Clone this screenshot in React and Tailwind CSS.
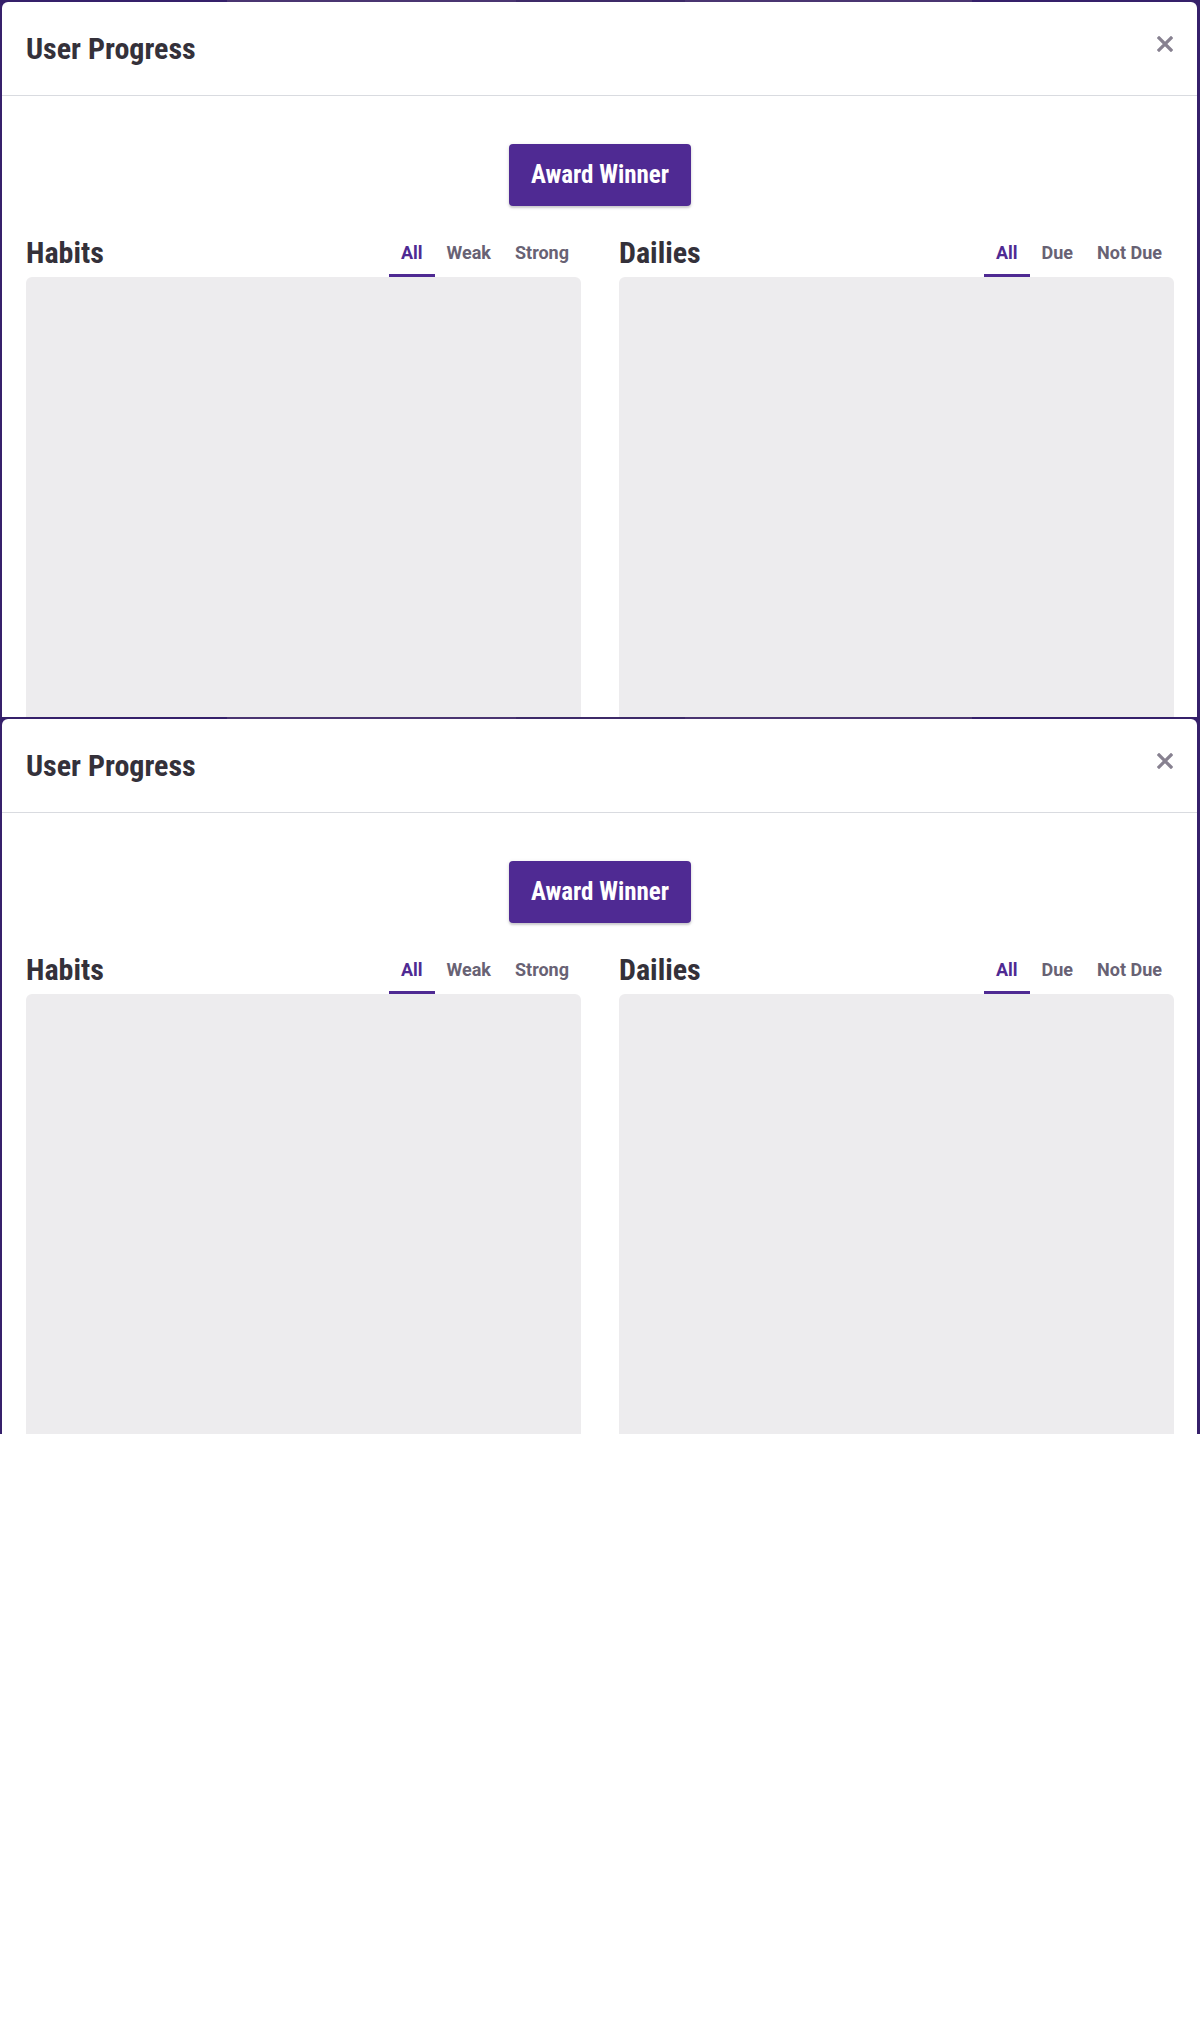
import React, { useState } from "react";

// 한 화면(717px) 안에 모달이 잘려 보이는 형태
const TILE_COUNT = 2;

const condensed = {
  fontFamily: '"Roboto Condensed", Roboto, "Liberation Sans", sans-serif',
};

function CloseIcon() {
  return (
    <svg width="16" height="16" viewBox="0 0 16 16" className="block">
      <path
        d="M2 2 L14 14 M14 2 L2 14"
        stroke="#878190"
        strokeWidth="3.2"
        strokeLinecap="square"
      />
    </svg>
  );
}

function Tabs({ items }) {
  const [active, setActive] = useState(items[0]);
  return (
    <div className="flex font-['Roboto',sans-serif]">
      {items.map((item) => (
        <button
          key={item}
          type="button"
          onClick={() => setActive(item)}
          className={`px-[12px] pb-[9px] text-[18px] leading-[24px] font-bold border-b-[3px] ${
            active === item
              ? "text-[#4f2a93] border-[#4f2a93]"
              : "text-[#686274] border-transparent"
          }`}
        >
          {item}
        </button>
      ))}
    </div>
  );
}

function Column({ title, tabs }) {
  return (
    <div className="flex flex-col min-w-0">
      <div className="flex items-end justify-between">
        <h2
          style={condensed}
          className="pb-[6px] text-[30px] leading-[36px] font-bold text-[#34313a] font-stretch-condensed"
        >
          {title}
        </h2>
        <Tabs items={tabs} />
      </div>
      <div className="h-[500px] rounded-t-[6px] bg-[#edecee]" />
    </div>
  );
}

function ProgressModal() {
  return (
    <div className="flex h-[717px] flex-col overflow-hidden bg-[#36206b]">
      {/* 모달 뒤 페이지 상단 (흐릿하게 보이는 부분) */}
      <div className="flex h-[2px] shrink-0">
        <div className="w-[227px] bg-[#35206a]" />
        <div className="w-[289px] bg-[#4a3571]" />
        <div className="w-[169px] bg-[#3d2a68]" />
        <div className="w-[287px] bg-[#4a3571]" />
        <div className="flex-1 bg-[#35206a]" />
      </div>

      <div className="ml-[2px] mr-[3px] flex-1 rounded-t-[6px] bg-white">
        {/* 헤더 */}
        <div className="flex h-[94px] justify-between border-b border-[#d9dbe0] pl-[24px] pr-[24px]">
          <h1
            style={condensed}
            className="self-center text-[30px] leading-[36px] font-bold text-[#34313a] font-stretch-condensed"
          >
            User Progress
          </h1>
          <button type="button" className="mt-[34px] self-start">
            <CloseIcon />
          </button>
        </div>

        {/* 본문 */}
        <div className="pl-[24px] pr-[23px] pt-[48px]">
          <div className="flex justify-center">
            <button
              type="button"
              style={condensed}
              className="h-[62px] w-[182px] rounded-[4px] bg-[#4f2a93] text-[25px] font-bold text-white shadow-[0_2px_2px_rgba(26,24,29,0.16),0_1px_4px_rgba(26,24,29,0.12)] font-stretch-condensed"
            >
              Award Winner
            </button>
          </div>

          <div className="mt-[29px] grid grid-cols-2 gap-x-[38px]">
            <Column title="Habits" tabs={["All", "Weak", "Strong"]} />
            <Column title="Dailies" tabs={["All", "Due", "Not Due"]} />
          </div>
        </div>
      </div>
    </div>
  );
}

export default function App() {
  return (
    <div className="min-h-[2034px] w-full bg-white">
      {Array.from({ length: TILE_COUNT }).map((_, i) => (
        <ProgressModal key={i} />
      ))}
    </div>
  );
}
